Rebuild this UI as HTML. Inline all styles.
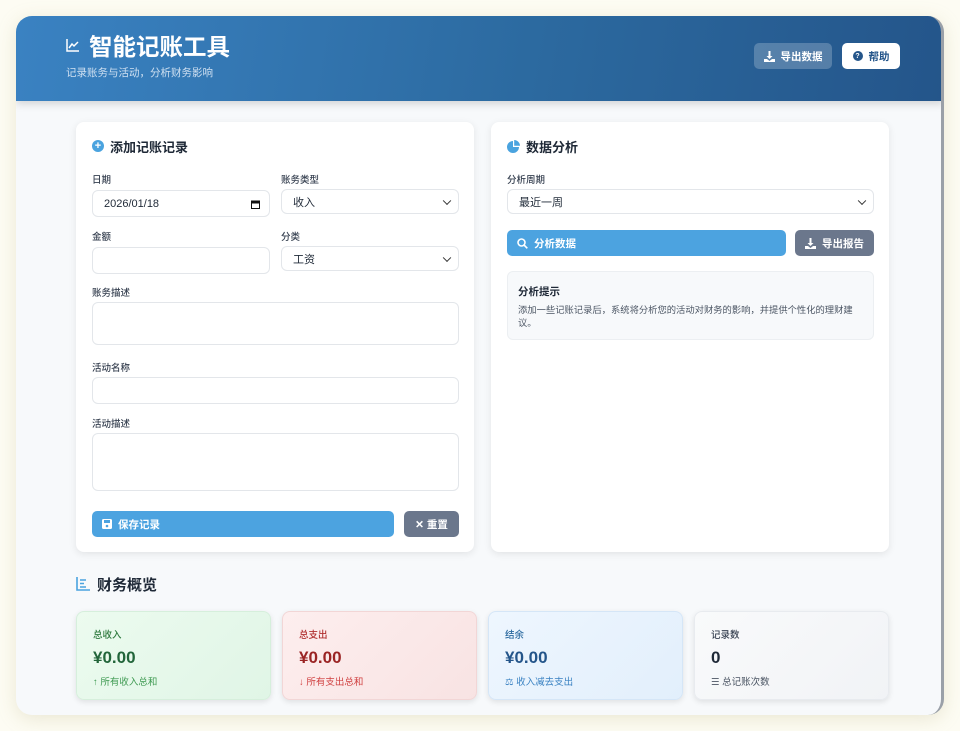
<!DOCTYPE html>
<html><head><meta charset="utf-8"><style>
*{box-sizing:border-box;margin:0;padding:0}
body{width:960px;height:731px;background:#fdfcf3;font-family:"Liberation Sans","Noto Sans CJK SC",sans-serif;position:relative;overflow:hidden;color:#1f2937}
.app{position:absolute;left:16px;top:16px;width:928px;height:699px;border-radius:16px;background:#f7f9fb;overflow:hidden;box-shadow:0 4px 18px rgba(180,170,120,.25);border-right:3px solid #9aa0a8}
.hdr{position:absolute;left:0;top:0;width:928px;height:85px;background:linear-gradient(100deg,#3a82c2,#2c6aa0 55%,#24558a);box-shadow:0 3px 8px rgba(0,0,0,.15)}
.a{position:absolute}
.card{position:absolute;background:#fff;border-radius:8px;box-shadow:0 2px 8px rgba(0,0,0,.09)}
.lbl{position:absolute;font-size:9.5px;color:#374151;font-weight:500}
.inp{position:absolute;border:1px solid #e3e6ea;border-radius:6px;background:#fff;font-size:11px;color:#1f2937;padding-left:11px;display:flex;align-items:center}
.chev{position:absolute;right:8px;top:50%;width:6px;height:6px;border-right:1.3px solid #333;border-bottom:1.3px solid #333;transform:translateY(-70%) rotate(45deg)}
.btn{position:absolute;border-radius:5px;color:#fff;font-size:10.5px;font-weight:bold;display:flex;align-items:center;gap:6px}
.st{position:absolute;top:595px;width:195px;height:89px;border-radius:8px;box-shadow:0 2px 6px rgba(0,0,0,.1);padding:15px 0 0 16px}
.st .l{font-size:9.5px;font-weight:500}
.st .v{font-size:17px;font-weight:bold;margin-top:7px}
.st .s{font-size:9.5px;margin-top:6px}
</style></head><body>
<div class="app">
 <div class="hdr">
  <svg class="a" style="left:50px;top:22px" width="14" height="14" viewBox="0 0 14 14" fill="none" stroke="#fff" stroke-width="1.5"><path d="M1 1v12h12"/><path d="M3 10l3-4 2 2 4-4"/></svg>
  <div class="a" style="left:73px;top:12px;font-size:23.5px;font-weight:bold;color:#fff">智能记账工具</div>
  <div class="a" style="left:50px;top:49px;font-size:10.5px;color:#cfe0f1">记录账务与活动，分析财务影响</div>
  <div class="btn" style="left:738px;top:27px;width:78px;height:26px;background:rgba(255,255,255,.22);justify-content:center">
   <svg width="11" height="11" viewBox="0 0 11 11" fill="#fff"><path d="M4.5 0h2v5h2l-3 3-3-3h2z"/><path d="M0 8h3l2.5 2 2.5-2h3v3H0z"/></svg>导出数据</div>
  <div class="btn" style="left:826px;top:27px;width:58px;height:26px;background:#fff;color:#24558a;justify-content:center">
   <span style="width:10px;height:10px;border-radius:50%;background:#24558a;color:#fff;font-size:7px;display:flex;align-items:center;justify-content:center">?</span>帮助</div>
 </div>

 <div class="card" style="left:60px;top:106px;width:398px;height:430px">
  <div class="a" style="left:16px;top:18px;width:12px;height:12px;border-radius:50%;background:#4aa3df;color:#fff;font-size:11px;line-height:12px;text-align:center;font-weight:bold">+</div>
  <div class="a" style="left:34px;top:15px;font-size:13px;font-weight:bold">添加记账记录</div>
  <div class="lbl" style="left:16px;top:50px">日期</div>
  <div class="inp" style="left:16px;top:68px;width:178px;height:27px">2026/01/18<svg class="a" style="right:9px;top:9px" width="9" height="9" viewBox="0 0 9 9"><rect x="0.5" y="1" width="8" height="7.5" fill="none" stroke="#111"/><rect x="0.5" y="1" width="8" height="2.5" fill="#111"/></svg></div>
  <div class="lbl" style="left:205px;top:50px">账务类型</div>
  <div class="inp" style="left:205px;top:67px;width:178px;height:25px">收入<span class="chev"></span></div>
  <div class="lbl" style="left:16px;top:107px">金额</div>
  <div class="inp" style="left:16px;top:125px;width:178px;height:27px"></div>
  <div class="lbl" style="left:205px;top:107px">分类</div>
  <div class="inp" style="left:205px;top:124px;width:178px;height:25px">工资<span class="chev"></span></div>
  <div class="lbl" style="left:16px;top:163px">账务描述</div>
  <div class="inp" style="left:16px;top:180px;width:367px;height:43px"></div>
  <div class="lbl" style="left:16px;top:238px">活动名称</div>
  <div class="inp" style="left:16px;top:255px;width:367px;height:27px"></div>
  <div class="lbl" style="left:16px;top:294px">活动描述</div>
  <div class="inp" style="left:16px;top:311px;width:367px;height:58px"></div>
  <div class="btn" style="left:16px;top:389px;width:302px;height:26px;background:#4ca3e0;padding-left:10px">
   <svg width="10" height="10" viewBox="0 0 10 10"><rect width="10" height="10" rx="1.5" fill="#fff"/><rect x="2" y="1" width="6" height="3" fill="#4ca3e0"/><circle cx="5" cy="7" r="1.3" fill="#4ca3e0"/></svg>保存记录</div>
  <div class="btn" style="left:328px;top:389px;width:55px;height:26px;background:#6b778c;justify-content:center">✕ 重置</div>
 </div>

 <div class="card" style="left:475px;top:106px;width:398px;height:430px">
  <svg class="a" style="left:16px;top:18px" width="13" height="13" viewBox="0 0 13 13"><path d="M6 1a6 6 0 1 0 6 6H6z" fill="#4aa3df"/><path d="M7.2 0v5.8H13A6 6 0 0 0 7.2 0z" fill="#4aa3df"/></svg>
  <div class="a" style="left:35px;top:15px;font-size:13px;font-weight:bold">数据分析</div>
  <div class="lbl" style="left:16px;top:50px">分析周期</div>
  <div class="inp" style="left:16px;top:67px;width:367px;height:25px">最近一周<span class="chev"></span></div>
  <div class="btn" style="left:16px;top:108px;width:279px;height:26px;background:#4ca3e0;padding-left:10px">
   <svg width="11" height="11" viewBox="0 0 11 11" fill="none" stroke="#fff" stroke-width="1.6"><circle cx="4.5" cy="4.5" r="3.5"/><path d="M7 7l3.3 3.3"/></svg>分析数据</div>
  <div class="btn" style="left:304px;top:108px;width:79px;height:26px;background:#6b778c;justify-content:center">
   <svg width="11" height="11" viewBox="0 0 11 11" fill="#fff"><path d="M4.5 0h2v5h2l-3 3-3-3h2z"/><path d="M0 8h3l2.5 2 2.5-2h3v3H0z"/></svg>导出报告</div>
  <div class="a" style="left:16px;top:149px;width:367px;height:69px;background:#f7f9fb;border:1px solid #eceff2;border-radius:6px;padding:12px 10px">
   <div style="font-size:10.5px;font-weight:bold;color:#1f2937">分析提示</div>
   <div style="font-size:9.3px;color:#4b5563;line-height:13px;margin-top:5px">添加一些记账记录后，系统将分析您的活动对财务的影响，并提供个性化的理财建议。</div>
  </div>
 </div>

 <svg class="a" style="left:60px;top:561px" width="14" height="14" viewBox="0 0 14 14" fill="none" stroke="#4aa3df" stroke-width="1.6"><path d="M1 0v13h13"/><path d="M4 3h6M4 6.5h4M4 10h6"/></svg>
 <div class="a" style="left:81px;top:558px;font-size:15px;font-weight:bold">财务概览</div>

 <div class="st" style="left:60px;background:linear-gradient(135deg,#ecfbef,#e0f5e6);border:1px solid #d6efdc">
  <div class="l" style="color:#2f7a3f">总收入</div><div class="v" style="color:#22653a">¥0.00</div><div class="s" style="color:#3f9a52">↑ 所有收入总和</div></div>
 <div class="st" style="left:266px;background:linear-gradient(135deg,#fdeeee,#f8e3e3);border:1px solid #f2d6d6">
  <div class="l" style="color:#b03030">总支出</div><div class="v" style="color:#9a2424">¥0.00</div><div class="s" style="color:#d04040">↓ 所有支出总和</div></div>
 <div class="st" style="left:472px;background:linear-gradient(135deg,#eef6fe,#e2effc);border:1px solid #d5e6f7">
  <div class="l" style="color:#2c6aa0">结余</div><div class="v" style="color:#24558a">¥0.00</div><div class="s" style="color:#3a82c2">⚖ 收入减去支出</div></div>
 <div class="st" style="left:678px;background:linear-gradient(135deg,#f9fafb,#f1f3f6);border:1px solid #e8ebef">
  <div class="l" style="color:#374151">记录数</div><div class="v" style="color:#1f2937">0</div><div class="s" style="color:#4b5563">☰ 总记账次数</div></div>
</div>
</body></html>
